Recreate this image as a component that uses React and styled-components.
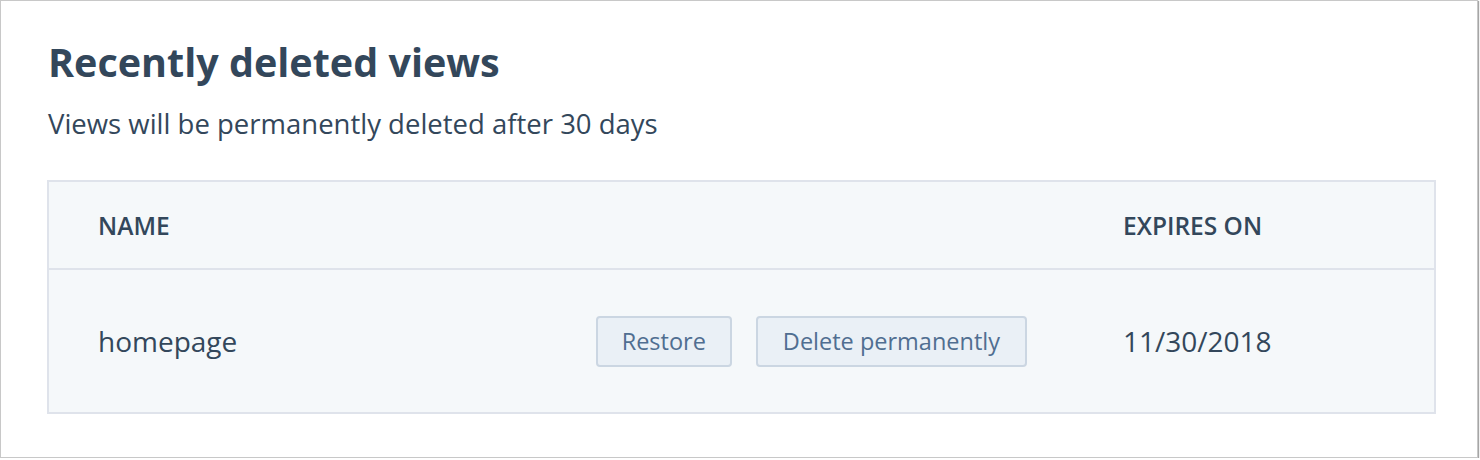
import React from 'react';
import styled, { createGlobalStyle } from 'styled-components';

const GlobalStyle = createGlobalStyle`
  html, body {
    margin: 0;
    padding: 0;
    background: #ffffff;
  }
  body {
    font-family: "Open Sans", "Noto Sans", sans-serif;
    color: #33475b;
  }
`;

const Panel = styled.section`
  box-sizing: border-box;
  width: 1478px;
  height: 458px;
  border: 1px solid #c8c8c8;
  box-shadow: 1px 1px 1px rgba(0, 0, 0, 0.35);
  background: #fff;
  padding: 37px 41px 0 46px;
`;

const Title = styled.h1`
  margin: 0 0 0 1px;
  font-size: 39.5px;
  line-height: 48px;
  font-weight: 700;
  color: #33475b;
`;

const Subtitle = styled.p`
  margin: 21px 0 0 1px;
  font-size: 27.5px;
  line-height: 34px;
  font-weight: 400;
  color: #33475b;
`;

const Table = styled.div`
  margin-top: 39px;
  border: 2px solid #dfe3eb;
  background: #f5f8fa;
`;

const Row = styled.div`
  display: grid;
  grid-template-columns: 1fr auto 311px;
  column-gap: 96px;
  align-items: center;
  padding-left: 49px;
  height: ${(p) => p.$height}px;
  border-top: ${(p) => (p.$divider ? '2px solid #dfe3eb' : 'none')};
`;

const HeadCell = styled.div`
  font-size: 24.5px;
  font-weight: 600;
  text-transform: uppercase;
  color: #33475b;
`;

const Cell = styled.div`
  font-size: 28px;
  color: #33475b;
`;

const Actions = styled.div`
  display: flex;
  gap: 24px;
`;

const Button = styled.button`
  box-sizing: border-box;
  height: 51px;
  padding: 0 ${(p) => (p.$wide ? 25 : 24)}px;
  border: 2px solid #cbd6e2;
  border-radius: 4px;
  background: #eaf0f6;
  color: #506e91;
  font-family: "Open Sans", "Noto Sans", sans-serif;
  font-size: 23.5px;
  cursor: pointer;
`;

const rows = [{ name: 'homepage', expires: '11/30/2018' }];

export default function App() {
  return (
    <>
      <GlobalStyle />
      <Panel>
        <Title>Recently deleted views</Title>
        <Subtitle>Views will be permanently deleted after 30 days</Subtitle>
        <Table>
          <Row $height={86}>
            <HeadCell>Name</HeadCell>
            <div />
            <HeadCell>Expires on</HeadCell>
          </Row>
          {rows.map((r) => (
            <Row key={r.name} $height={142} $divider>
              <Cell>{r.name}</Cell>
              <Actions>
                <Button>Restore</Button>
                <Button $wide>Delete permanently</Button>
              </Actions>
              <Cell>{r.expires}</Cell>
            </Row>
          ))}
        </Table>
      </Panel>
    </>
  );
}
